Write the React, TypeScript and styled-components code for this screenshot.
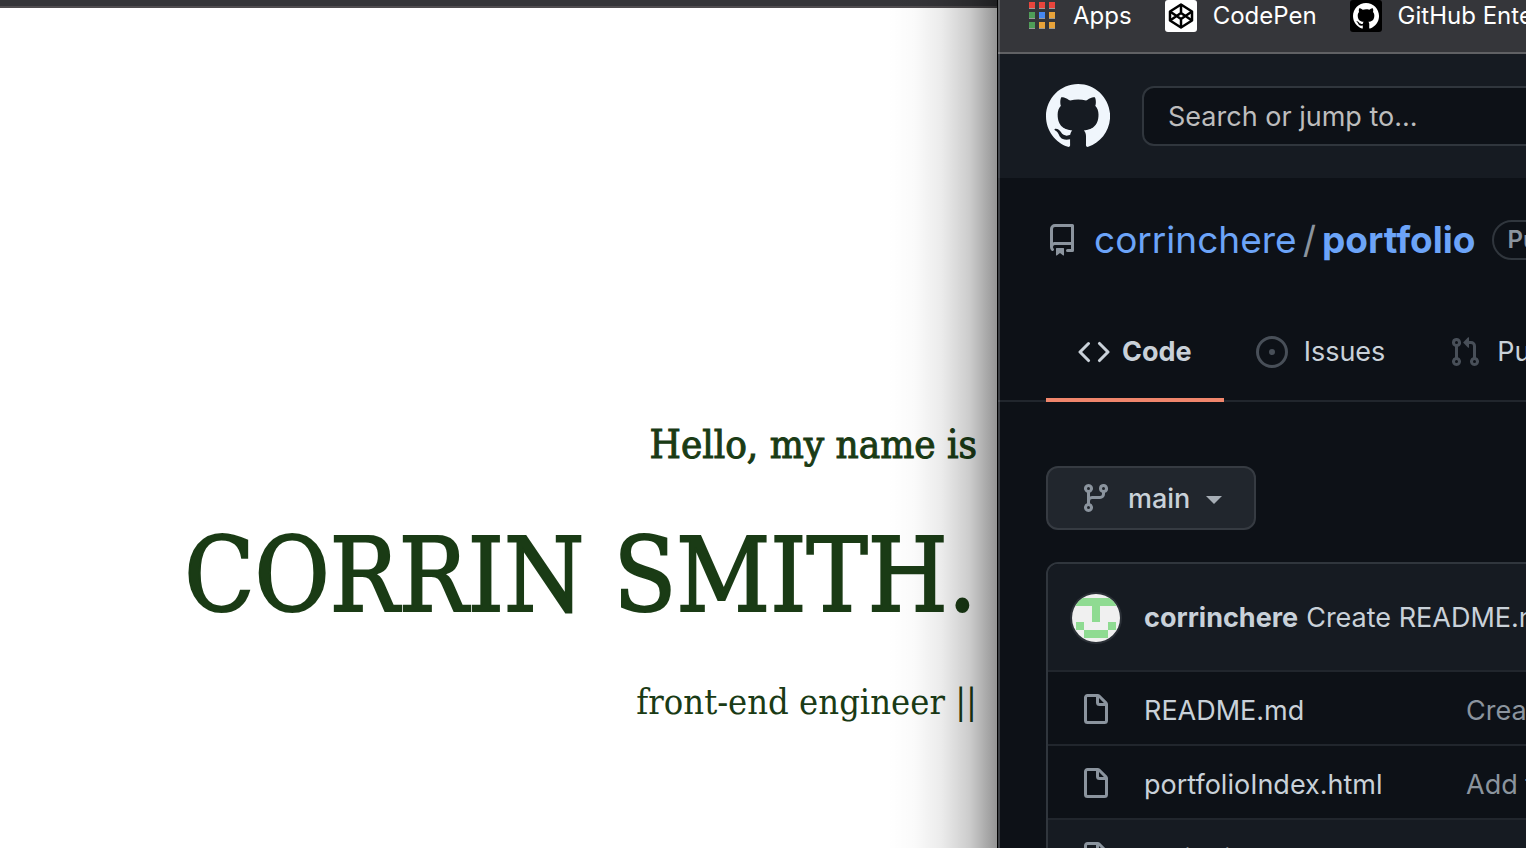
import React from "react";
import styled, { createGlobalStyle, css } from "styled-components";

const sans = `Inter, "Liberation Sans", sans-serif`;
const serif = `"DejaVu Serif Condensed", "DejaVu Serif", serif`;

const GlobalStyle = createGlobalStyle`
  *, *::before, *::after { box-sizing: border-box; }
  body { margin: 0; background: #fff; overflow: hidden; }
  a { color: inherit; text-decoration: none; }
  svg { display: block; flex: none; }
`;

const Desktop = styled.div`
  display: grid;
  grid-template-columns: minmax(0, 1fr) 529px;
  height: 100vh;
  overflow: hidden;
`;

/* Portfolio window */
const PortfolioWindow = styled.section`
  position: relative;
  display: flex;
  flex-direction: column;
  background: #fff;
  font-family: ${serif};
  color: #1a3b15;
`;

const Chrome = styled.div`
  height: 8px;
  background: #353539;
  border-bottom: 2px solid #504d50;
`;

const WindowShadow = styled.div`
  position: absolute;
  inset: 0 0 0 auto;
  width: 110px;
  pointer-events: none;
  background: linear-gradient(
    to right,
    rgba(0, 0, 0, 0) 0%,
    rgba(0, 0, 0, 0.02) 25%,
    rgba(0, 0, 0, 0.08) 50%,
    rgba(0, 0, 0, 0.2) 75%,
    rgba(0, 0, 0, 0.42) 100%
  );
`;

const Hero = styled.header`
  display: flex;
  flex-direction: column;
  align-items: flex-end;
  padding: 408px 20px 0 0;
  white-space: nowrap;
`;

const Greeting = styled.p`
  margin: 0;
  font-size: 40px;
  line-height: 56px;
  -webkit-text-stroke: 1px currentColor;
`;

const Name = styled.h1`
  margin: 24px 0 18px;
  font-size: 102px;
  font-weight: 400;
  line-height: 160px;
  -webkit-text-stroke: 2px currentColor;
`;

const Role = styled.p`
  margin: 0;
  font-size: 36px;
  line-height: 56px;
`;

/* Browser window */
const BrowserWindow = styled.section`
  position: relative;
  display: flex;
  flex-direction: column;
  min-width: 0;
  overflow: hidden;
  border-left: 1px solid #000;
  background: #0d1117;
  color: #c9d1d9;
  font-family: ${sans};
  font-size: 27px;
  line-height: 32px;
  white-space: nowrap;

  &::after {
    content: "";
    position: absolute;
    inset: 0 auto 0 0;
    width: 2px;
    background: rgba(255, 255, 255, 0.2);
  }
`;

const Bookmarks = styled.nav`
  display: flex;
  flex: none;
  gap: 33px;
  height: 54px;
  padding-left: 31px;
  background: #35363a;
  border-bottom: 2px solid #606164;
  color: #fff;
  font-size: 24px;
`;

const Bookmark = styled.a`
  display: flex;
  flex: none;
  align-items: center;
  gap: 16px;
  height: 32px;
`;

const SiteHeader = styled.header`
  display: flex;
  flex: none;
  align-items: center;
  gap: 32px;
  height: 124px;
  padding-left: 48px;
  background: #161b22;
  color: #f0f6fc;
`;

const SearchInput = styled.input`
  flex: none;
  width: 544px;
  height: 60px;
  padding: 0 24px;
  border: 2px solid #30363d;
  border-radius: 12px;
  background: #0d1117;
  color: #c9d1d9;
  font: 27px ${sans};
  &::placeholder { color: #bdbdbd; opacity: 1; }
`;

const RepoTitle = styled.h2`
  display: flex;
  flex: none;
  align-items: center;
  margin: 38px 0 0;
  padding-left: 48px;
  font-size: 37px;
  font-weight: 400;
  line-height: 48px;
  color: #8b949e;
`;

const RepoLink = styled.a<{ $strong?: boolean }>`
  color: #6ca4f8;
  font-weight: ${(p) => (p.$strong ? 700 : 400)};
`;

const OwnerLink = styled(RepoLink)`
  margin-left: 16px;
`;

const Slash = styled.span`
  margin: 0 6px;
`;

const Visibility = styled.span`
  margin-left: 16px;
  padding: 0 14px;
  border: 2px solid #30363d;
  border-radius: 20px;
  font-size: 24px;
  font-weight: 600;
  line-height: 36px;
`;

const Tabs = styled.nav`
  display: flex;
  flex: none;
  height: 98px;
  margin-top: 40px;
  padding-left: 48px;
  border-bottom: 2px solid #21262d;
`;

const Tab = styled.a<{ $active?: boolean }>`
  display: flex;
  flex: none;
  align-items: center;
  gap: 16px;
  height: 98px;
  padding: 2px 32px 0;
  border-bottom: 4px solid transparent;
  color: #c9d1d9;
  svg { color: #484f58; }
  ${(p) =>
    p.$active &&
    css`
      gap: 12px;
      border-color: #f0866c;
      font-weight: 700;
      svg { color: #c9d1d9; }
    `}
`;

const Content = styled.main`
  flex: none;
  padding: 64px 0 0 48px;
`;

const BranchButton = styled.button`
  display: flex;
  align-items: center;
  gap: 16px;
  height: 64px;
  padding: 0 32px;
  border: 2px solid #363b42;
  border-radius: 12px;
  background: #21262d;
  color: #c9d1d9;
  font: 500 27px ${sans};
`;

const Caret = styled.span`
  margin-top: 4px;
  border: 8px solid transparent;
  border-top-color: #a6adb5;
  border-bottom: 0;
`;

const FileBox = styled.div`
  width: 1200px;
  margin-top: 32px;
  border: 2px solid #30363d;
  border-radius: 12px;
  overflow: hidden;
`;

const CommitBar = styled.div`
  display: flex;
  align-items: center;
  gap: 8px;
  height: 106px;
  padding: 2px 0 0 22px;
  background: #161b22;
`;

const Author = styled.a`
  margin-left: 14px;
  font-weight: 700;
`;

const FileTable = styled.table`
  width: 100%;
  border-collapse: separate;
  border-spacing: 0;
  table-layout: fixed;
`;

const IconCell = styled.td`
  width: 96px;
  padding: 4px 0 0 32px;
`;

const NameCell = styled.td`
  width: 322px;
  padding: 6px 0 0;
`;

const MessageCell = styled.td`
  padding: 6px 0 0;
  color: #8b949e;
`;

const FileRow = styled.tr<{ $hovered?: boolean }>`
  height: 74px;
  background: ${(p) => (p.$hovered ? "#161b22" : "#0d1117")};
  td { border-top: 2px solid #21262d; }
`;

const paths = {
  repo: "M2 2.5A2.5 2.5 0 014.5 0h8.75a.75.75 0 01.75.75v12.5a.75.75 0 01-.75.75h-2.5a.75.75 0 110-1.5h1.75v-2h-8a1 1 0 00-.714 1.7.75.75 0 01-1.072 1.05A2.495 2.495 0 012 11.5v-9zm10.5-1V9h-8c-.356 0-.694.074-1 .208V2.5a1 1 0 011-1h8zM5 12.25v3.25a.25.25 0 00.4.2l1.45-1.087a.25.25 0 01.3 0L8.6 15.7a.25.25 0 00.4-.2v-3.25a.25.25 0 00-.25-.25h-3.5a.25.25 0 00-.25.25z",
  code: "M4.72 3.22a.75.75 0 011.06 1.06L2.06 8l3.72 3.72a.75.75 0 11-1.06 1.06L.47 8.53a.75.75 0 010-1.06l4.25-4.25zm6.56 0a.75.75 0 10-1.06 1.06L13.94 8l-3.72 3.72a.75.75 0 101.06 1.06l4.25-4.25a.75.75 0 000-1.06l-4.25-4.25z",
  issue: "M8 9.5a1.5 1.5 0 100-3 1.5 1.5 0 000 3zM8 0a8 8 0 100 16A8 8 0 008 0zM1.5 8a6.5 6.5 0 1113 0 6.5 6.5 0 01-13 0z",
  pull: "M7.177 3.073L9.573.677A.25.25 0 0110 .854v4.792a.25.25 0 01-.427.177L7.177 3.427a.25.25 0 010-.354zM3.75 2.5a.75.75 0 100 1.5.75.75 0 000-1.5zm-2.25.75a2.25 2.25 0 113 2.122v5.256a2.251 2.251 0 11-1.5 0V5.372A2.25 2.25 0 011.5 3.25zM11 2.5h-1V4h1a1 1 0 011 1v5.628a2.251 2.251 0 101.5 0V5A2.5 2.5 0 0011 2.5zm1 10.25a.75.75 0 111.5 0 .75.75 0 01-1.5 0zM3.75 12a.75.75 0 100 1.5.75.75 0 000-1.5z",
  branch: "M11.75 2.5a.75.75 0 100 1.5.75.75 0 000-1.5zm-2.25.75a2.25 2.25 0 113 2.122V6A2.5 2.5 0 0110 8.5H6a1 1 0 00-1 1v1.128a2.251 2.251 0 11-1.5 0V5.372a2.25 2.25 0 111.5 0v1.836A2.492 2.492 0 016 7h4a1 1 0 001-1v-.628A2.25 2.25 0 019.5 3.25zM4.25 12a.75.75 0 100 1.5.75.75 0 000-1.5zM3.5 3.25a.75.75 0 111.5 0 .75.75 0 01-1.5 0z",
  file: "M3.75 1.5a.25.25 0 00-.25.25v11.5c0 .138.112.25.25.25h8.5a.25.25 0 00.25-.25V6H9.75A1.75 1.75 0 018 4.25V1.5H3.75zm5.75.56v2.19c0 .138.112.25.25.25h2.19L9.5 2.06zM2 1.75C2 .784 2.784 0 3.75 0h5.086c.464 0 .909.184 1.237.513l3.414 3.414c.329.328.513.773.513 1.237v8.086A1.75 1.75 0 0112.25 15h-8.5A1.75 1.75 0 012 13.25V1.75z",
  github: "M32.58 0C14.590 0 0 14.670 0 32.770c0 14.460 9.330 26.730 22.280 31.070 1.620.330 2.210-.700 2.210-1.570 0-.760-.050-3.360-.050-6.080-9.060 1.950-10.950-3.910-10.950-3.910-1.460-3.800-3.620-4.780-3.620-4.780-2.970-2.010.220-2.010.220-2.010 3.290.220 5.020 3.370 5.020 3.370 2.910 4.990 7.610 3.580 9.490 2.710.270-2.120 1.130-3.580 2.050-4.400-7.230-.760-14.830-3.580-14.830-16.180 0-3.590 1.290-6.520 3.340-8.800-.320-.810-1.460-4.180.330-8.680 0 0 2.750-.870 8.950 3.360a31.300 31.300 0 0 1 8.140-1.080c2.750 0 5.550.380 8.140 1.080 6.200-4.230 8.950-3.360 8.950-3.360 1.780 4.500.650 7.870.320 8.680 2.100 2.280 3.340 5.210 3.340 8.800 0 12.600-7.600 15.370-14.880 16.180 1.190 1.030 2.210 2.990 2.210 6.080 0 4.400-.050 7.930-.050 9.010 0 .870.590 1.900 2.210 1.570 12.950-4.340 22.280-16.610 22.280-31.070C65.160 14.670 50.520 0 32.580 0z",
};

interface IconProps {
  name: keyof typeof paths;
  size?: number;
  color?: string;
  box?: number;
}

function Icon({ name, size = 32, color = "currentColor", box = 16 }: IconProps) {
  return (
    <svg width={size} height={size} viewBox={`0 0 ${box} ${box}`} fill={color} aria-hidden="true">
      <path fillRule="evenodd" d={paths[name]} />
    </svg>
  );
}

function AppsIcon() {
  const colors = ["#e8453c", "#e8453c", "#e8453c", "#4f9d58", "#4688f1", "#e8a33a", "#4f9d58", "#e8a33a", "#e8a33a"];
  return (
    <svg width="28" height="32" viewBox="0 0 28 32" aria-hidden="true">
      {colors.map((c, i) => {
        const x = (i % 3) * 10;
        const y = 2 + Math.floor(i / 3) * 10;
        return (
          <g key={i}>
            <rect x={x} y={y} width="6" height="7" fill="#9a9a9a" />
            <rect x={x} y={y} width="6" height="6" fill={c} />
          </g>
        );
      })}
    </svg>
  );
}

function CodePenIcon() {
  return (
    <svg width="32" height="32" viewBox="0 0 32 32" aria-hidden="true">
      <rect width="32" height="32" rx="3" fill="#fff" />
      <g fill="none" stroke="#000" strokeWidth="2.5" strokeLinejoin="round">
        <path d="M16 4.500 27 11.500V20.500L16 27.500 5 20.500V11.500Z" />
        <path d="M5 11.500 16 19 27 11.500M5 20.500 16 13 27 20.500M16 4.500V13M16 19V27.500" />
      </g>
    </svg>
  );
}

function GitHubTile() {
  return (
    <svg width="32" height="32" viewBox="0 0 32 32" aria-hidden="true">
      <rect width="32" height="32" rx="3" fill="#000" />
      <path transform="translate(3 3) scale(0.4)" fill="#fff" d={paths.github} />
    </svg>
  );
}

function Avatar() {
  return (
    <svg width="52" height="52" viewBox="0 0 52 52" aria-hidden="true">
      <defs>
        <clipPath id="avatar">
          <circle cx="26" cy="26" r="24" />
        </clipPath>
      </defs>
      <circle cx="26" cy="26" r="26" fill="#2b3037" />
      <g clipPath="url(#avatar)">
        <rect width="52" height="52" fill="#f0f0f0" />
        <path fill="#8fdb92" d="M6 6h40v8H30v16h-8V14H6zM6 30h8v8H6zM38 30h8v8h-8zM14 38h24v8H14z" />
      </g>
    </svg>
  );
}

const files = [
  { name: "README.md", message: "Create README.md" },
  { name: "portfolioIndex.html", message: "Add typing effect" },
  { name: "script.js", message: "Add typing effect", hovered: true },
];

export default function App() {
  return (
    <>
      <GlobalStyle />
      <Desktop>
        <PortfolioWindow>
          <Chrome />
          <Hero>
            <Greeting>Hello, my name is</Greeting>
            <Name>CORRIN SMITH.</Name>
            <Role>front-end engineer ||</Role>
          </Hero>
          <WindowShadow />
        </PortfolioWindow>
        <BrowserWindow>
          <Bookmarks aria-label="Bookmarks">
            <Bookmark href="#apps"><AppsIcon />Apps</Bookmark>
            <Bookmark href="#codepen"><CodePenIcon />CodePen</Bookmark>
            <Bookmark href="#enterprise"><GitHubTile />GitHub Enterprise</Bookmark>
          </Bookmarks>
          <SiteHeader>
            <a href="#home" aria-label="Homepage"><Icon name="github" size={64} box={65} /></a>
            <SearchInput type="text" aria-label="Search" placeholder="Search or jump to..." />
          </SiteHeader>
          <RepoTitle>
            <Icon name="repo" />
            <OwnerLink href="#owner">corrinchere</OwnerLink>
            <Slash>/</Slash>
            <RepoLink href="#repo" $strong>portfolio</RepoLink>
            <Visibility>Public</Visibility>
          </RepoTitle>
          <Tabs aria-label="Repository">
            <Tab href="#code" $active><Icon name="code" />Code</Tab>
            <Tab href="#issues"><Icon name="issue" />Issues</Tab>
            <Tab href="#pulls"><Icon name="pull" />Pull requests</Tab>
          </Tabs>
          <Content>
            <BranchButton type="button">
              <Icon name="branch" color="#8b949e" />
              main
              <Caret />
            </BranchButton>
            <FileBox>
              <CommitBar>
                <Avatar />
                <Author href="#author">corrinchere</Author>
                <a href="#commit">Create README.md</a>
              </CommitBar>
              <FileTable>
                <tbody>
                  {files.map((f) => (
                    <FileRow key={f.name} $hovered={f.hovered}>
                      <IconCell><Icon name="file" color="#8b949e" /></IconCell>
                      <NameCell><a href="#file">{f.name}</a></NameCell>
                      <MessageCell>{f.message}</MessageCell>
                    </FileRow>
                  ))}
                </tbody>
              </FileTable>
            </FileBox>
          </Content>
        </BrowserWindow>
      </Desktop>
    </>
  );
}
